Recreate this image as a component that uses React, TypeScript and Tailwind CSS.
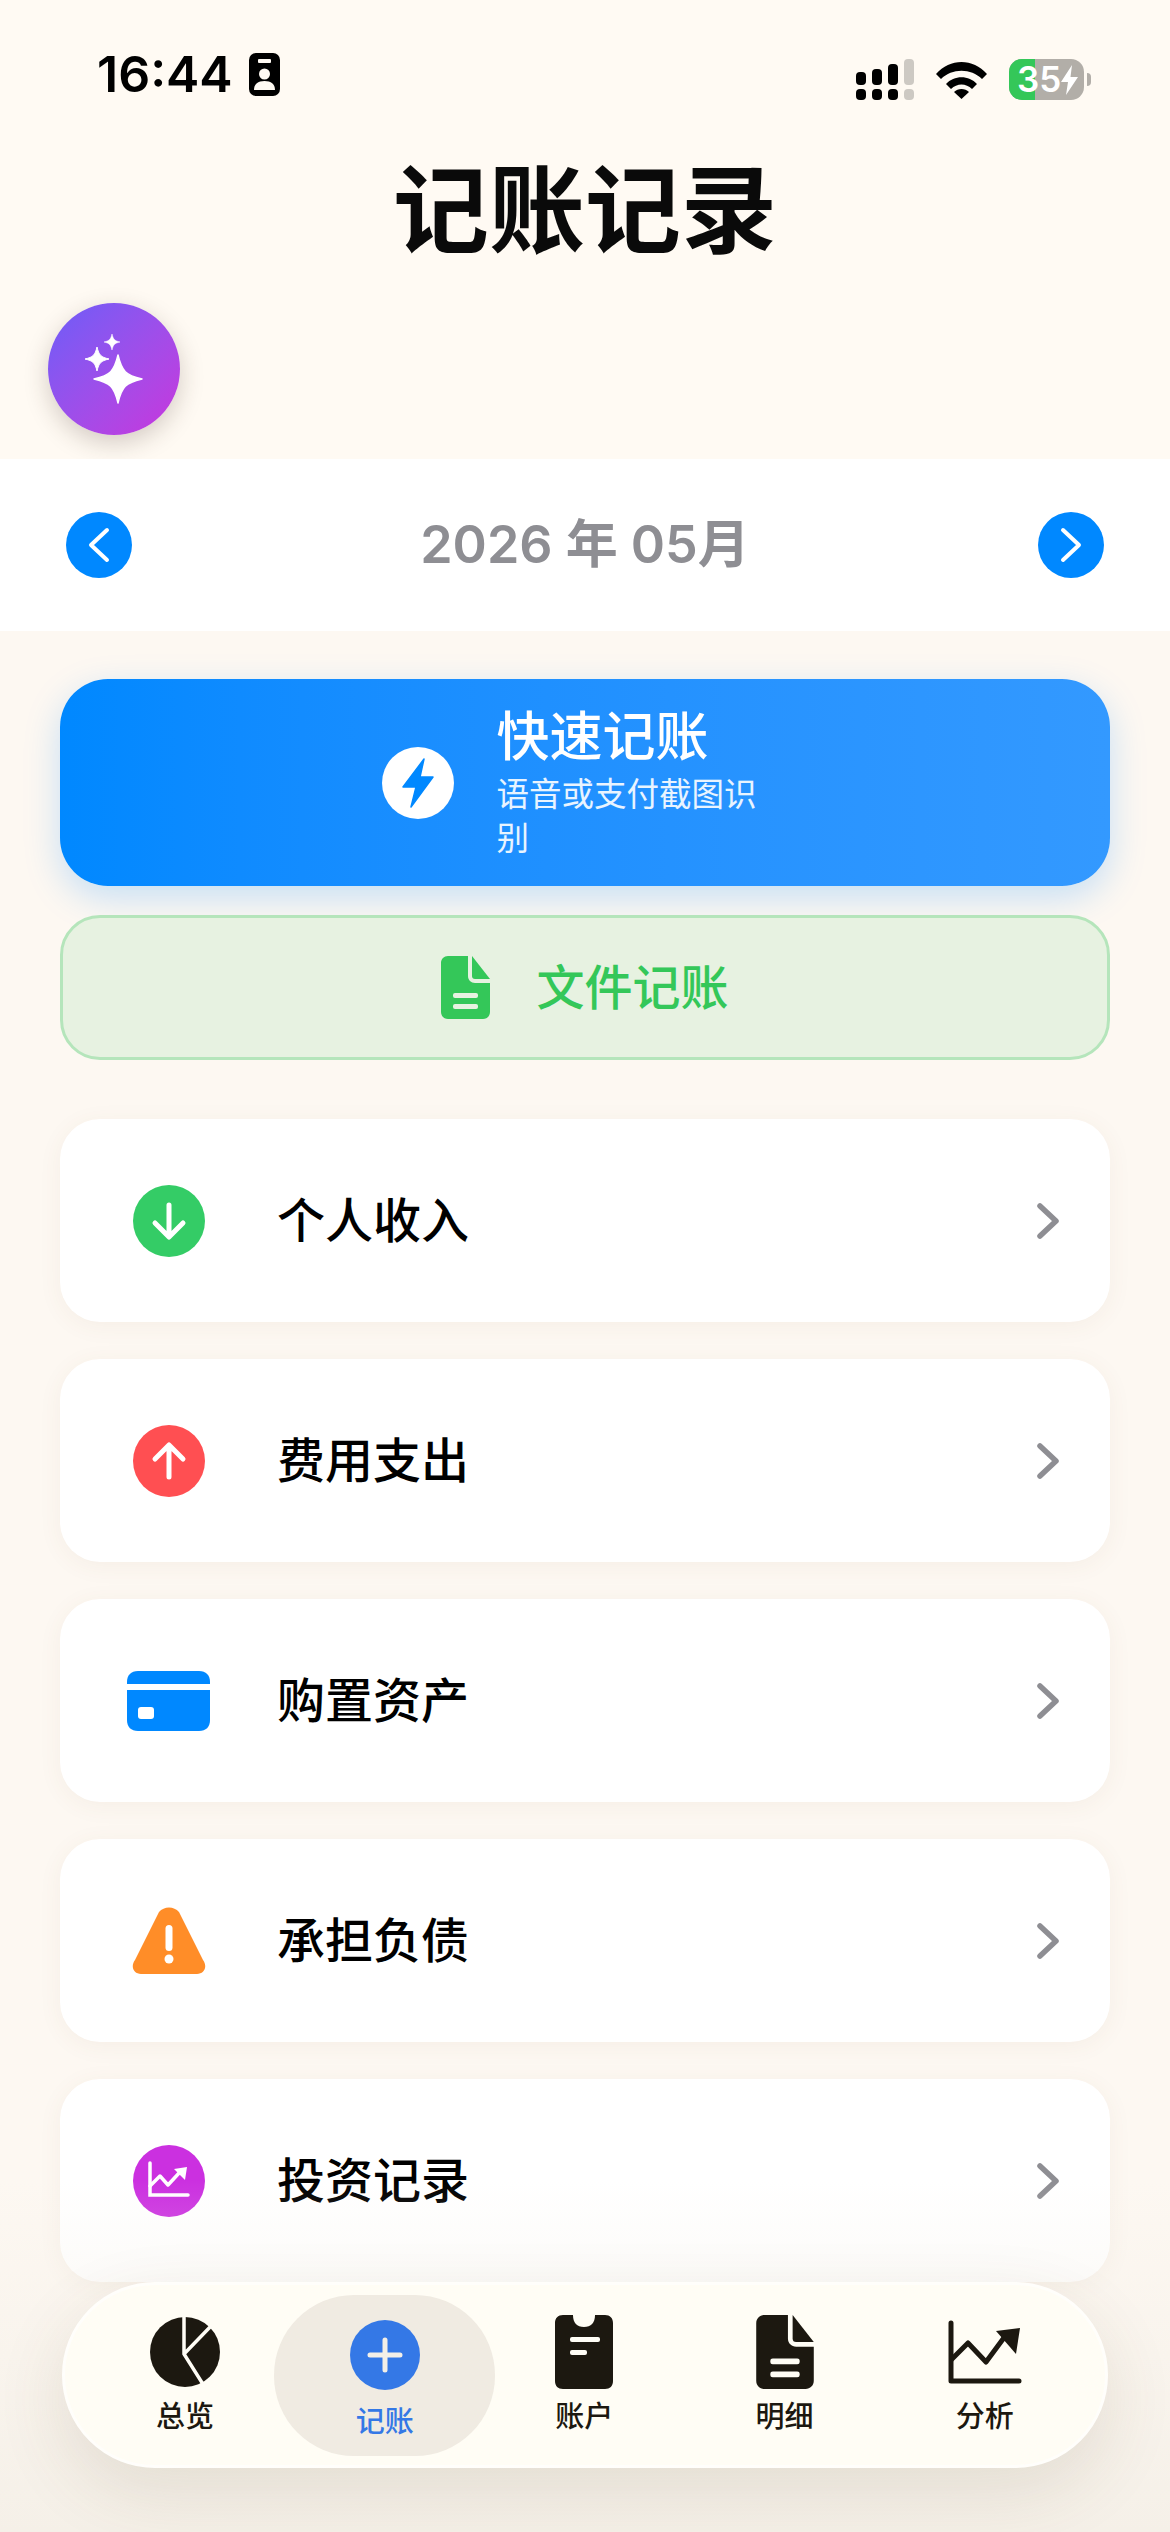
import type { ReactNode } from 'react';

const star = (x: number, y: number, r: number) => {
  const k = r * 0.16;
  return `M${x} ${y - r}C${x + k} ${y - k * 2} ${x + k * 2} ${y - k} ${x + r} ${y}C${x + k * 2} ${y + k} ${x + k} ${y + k * 2} ${x} ${y + r}C${x - k} ${y + k * 2} ${x - k * 2} ${y + k} ${x - r} ${y}C${x - k * 2} ${y - k} ${x - k} ${y - k * 2} ${x} ${y - r}Z`;
};

function StatusBar() {
  return (
    <div className="flex h-[100px] items-end justify-between pl-[97px] pr-[79px]">
      <div className="flex items-center gap-[16px] pb-[1px]">
        <span className="text-[50px] font-semibold leading-[50px] text-black">16:44</span>
        <svg width="31" height="43" viewBox="0 0 31 43">
          <rect width="31" height="43" rx="7" fill="#000" />
          <rect x="9" y="6" width="13" height="4" rx="1" fill="#fffaf3" />
          <circle cx="15.5" cy="21" r="5.5" fill="#fffaf3" />
          <path d="M5 37c0-6 4-9 10.500-9s10.500 3 10.500 9z" fill="#fffaf3" />
        </svg>
      </div>
      <div className="flex items-center gap-[22px]">
        <svg width="58" height="41" viewBox="0 0 58 41">
          <rect x="0" y="13" width="10" height="13" rx="4" fill="#000" />
          <rect x="16" y="10" width="10" height="16" rx="4" fill="#000" />
          <rect x="32" y="5" width="10" height="21" rx="4" fill="#000" />
          <rect x="48" y="0" width="10" height="26" rx="4" fill="#cdc9c3" />
          <rect x="0" y="30" width="10" height="11" rx="4" fill="#000" />
          <rect x="16" y="30" width="10" height="11" rx="4" fill="#000" />
          <rect x="32" y="30" width="10" height="11" rx="4" fill="#000" />
          <rect x="48" y="30" width="10" height="11" rx="4" fill="#cdc9c3" />
        </svg>
        <svg width="51" height="38" viewBox="0 0 51 38">
          <path d="M0 13C14 -3 37 -3 51 13L46 18C35 7 16 7 5 18Z" fill="#000" />
          <path d="M10 23C18 14 33 14 41 23L36 28C30 22 21 22 15 28Z" fill="#000" />
          <path d="M18 31C22 27 29 27 33 31L25.500 38Z" fill="#000" />
        </svg>
        <div className="flex items-center gap-[3px]">
          <div className="relative flex h-[41px] w-[75px] items-center overflow-hidden rounded-[13px] bg-[#b2aea8] pl-[8px]">
            <div className="absolute inset-y-0 left-0 w-[26px] bg-[#34c759]" />
            <span className="relative text-[35px] font-semibold leading-none text-white">35</span>
            <svg className="relative" width="17" height="30" viewBox="0 0 17 30">
              <path d="M11 0L0 17H7L5 30L17 12H9.500Z" fill="#fff" />
            </svg>
          </div>
          <div className="h-[13px] w-[4px] rounded-r-full bg-[#b2aea8]" />
        </div>
      </div>
    </div>
  );
}

function FileIcon({ w, h, color, bar }: { w: number; h: number; color: string; bar: string }) {
  return (
    <svg width={w} height={h} viewBox="0 0 49 63">
      <path d="M7 0H27V20C27 24 30 27 34 27H49V56C49 60 46 63 42 63H7C3 63 0 60 0 56V7C0 3 3 0 7 0Z" fill={color} />
      <path d="M31 0L49 23H34C32 23 31 22 31 20Z" fill={color} />
      <rect x="12" y="37" width="25" height="5" rx="2" fill={bar} />
      <rect x="12" y="48" width="25" height="5" rx="2" fill={bar} />
    </svg>
  );
}

function ArrowCircle({ color, up }: { color: string; up?: boolean }) {
  return (
    <svg width="72" height="72" viewBox="0 0 72 72">
      <circle cx="36" cy="36" r="36" fill={color} />
      <path
        d={up ? 'M36 52V21M22 34L36 20L50 34' : 'M36 20V51M22 38L36 52L50 38'}
        fill="none"
        stroke="#fff"
        strokeWidth="5"
        strokeLinecap="round"
        strokeLinejoin="round"
      />
    </svg>
  );
}

function CardIcon() {
  return (
    <svg width="83" height="60" viewBox="0 0 83 60">
      <path d="M0 11C0 4 4 0 11 0H72C79 0 83 4 83 11V13H0Z" fill="#0088ff" />
      <path d="M0 19H83V49C83 56 79 60 72 60H11C4 60 0 56 0 49Z" fill="#0088ff" />
      <rect x="11" y="36" width="16" height="12" rx="3" fill="#fff" />
    </svg>
  );
}

function WarnIcon() {
  return (
    <svg width="74" height="67" viewBox="0 0 74 67">
      <path d="M27 5C32 -1 42 -1 47 5L71 53C76 60 72 67 65 67H9C2 67 -2 60 3 53Z" fill="#ff8d28" />
      <rect x="33.500" y="18" width="7" height="26" rx="3.500" fill="#fff" />
      <circle cx="37" cy="52" r="4.500" fill="#fff" />
    </svg>
  );
}

function InvestIcon() {
  return (
    <svg width="72" height="72" viewBox="0 0 72 72">
      <circle cx="36" cy="36" r="36" fill="#cb30e0" />
      <path d="M17 18V50H55" fill="none" stroke="#fff" strokeWidth="3.500" strokeLinecap="round" />
      <path d="M17 41L27 31L35 40L47 27" fill="none" stroke="#fff" strokeWidth="3.500" strokeLinecap="round" strokeLinejoin="round" />
      <path d="M41 24L54 22L52 35Z" fill="#fff" />
    </svg>
  );
}

const rows: { label: string; icon: ReactNode }[] = [
  { label: '个人收入', icon: <ArrowCircle color="#34cc66" /> },
  { label: '费用支出', icon: <ArrowCircle color="#ff4f52" up /> },
  { label: '购置资产', icon: <CardIcon /> },
  { label: '承担负债', icon: <WarnIcon /> },
  { label: '投资记录', icon: <InvestIcon /> },
];

function RecordRow({ label, icon }: { label: string; icon: ReactNode }) {
  return (
    <div className="flex h-[203px] items-center rounded-[40px] bg-white pr-[50px] shadow-[0_4px_24px_rgba(120,90,50,0.06)]">
      <div className="flex w-[217px] justify-center pr-[0px]">
        <div className="flex w-[144px] justify-center">{icon}</div>
      </div>
      <span className="flex-1 text-[48px] font-medium leading-none text-black">{label}</span>
      <svg width="24" height="38" viewBox="0 0 24 38">
        <path d="M4 4L20 19L4 34" fill="none" stroke="#8e8e93" strokeWidth="5.500" strokeLinecap="round" strokeLinejoin="round" />
      </svg>
    </div>
  );
}

function PieIcon() {
  return (
    <svg width="70" height="70" viewBox="0 0 70 70">
      <circle cx="35" cy="35" r="35" fill="#1c1810" />
      <path d="M34 0V37L56 72M34 37L62 8" fill="none" stroke="#fffdf6" strokeWidth="3.500" />
    </svg>
  );
}

function AccountIcon() {
  return (
    <svg width="58" height="74" viewBox="0 0 58 74">
      <path d="M8 0H18C18 8 22 12 29 12C36 12 40 8 40 0H50C55 0 58 3 58 8V66C58 71 55 74 50 74H8C3 74 0 71 0 66V8C0 3 3 0 8 0Z" fill="#1c1810" />
      <rect x="15" y="22" width="30" height="5" rx="2" fill="#fffdf6" />
      <rect x="15" y="35" width="17" height="5" rx="2" fill="#fffdf6" />
    </svg>
  );
}

function ChartIcon() {
  return (
    <svg width="74" height="64" viewBox="0 0 74 64">
      <path d="M3 3V61H71" fill="none" stroke="#1c1810" strokeWidth="5" strokeLinecap="round" strokeLinejoin="round" />
      <path d="M3 40L20 23L38 42L58 15" fill="none" stroke="#1c1810" strokeWidth="5" strokeLinejoin="round" />
      <path d="M48 11L72 8L68 34Z" fill="#1c1810" />
    </svg>
  );
}

function TabBar() {
  return (
    <div className="absolute left-[62px] top-[2282px] flex h-[186px] w-[1046px] items-center rounded-[93px] border-[3px] border-[#fffefb] bg-[#fffdf5] px-[20px] shadow-[0_24px_70px_rgba(90,70,40,0.12)]">
      <Tab label="总览" icon={<PieIcon />} />
      <div className="-mx-[11px] flex h-[161px] w-[221px] shrink-0 flex-col items-center justify-start rounded-[80px] bg-[#f0ebe2] pt-[25px]">
        <svg width="70" height="70" viewBox="0 0 70 70">
          <circle cx="35" cy="35" r="35" fill="#3478e6" />
          <path d="M35 20V50M20 35H50" stroke="#f3efe7" strokeWidth="5" strokeLinecap="round" />
        </svg>
        <span className="mt-[14px] text-[29px] font-medium leading-[36px] text-[#3478e6]">记账</span>
      </div>
      <Tab label="账户" icon={<AccountIcon />} />
      <Tab label="明细" icon={<FileIconTab />} />
      <Tab label="分析" icon={<ChartIcon />} />
    </div>
  );
}

function FileIconTab() {
  return <FileIcon w={58} h={74} color="#1c1810" bar="#fffdf5" />;
}

function Tab({ label, icon }: { label: string; icon: ReactNode }) {
  return (
    <div className="flex flex-1 flex-col items-center">
      <div className="flex h-[74px] items-center">{icon}</div>
      <span className="mt-[10px] text-[29px] font-medium leading-[36px] text-[#1c1810]">{label}</span>
    </div>
  );
}

export default function App() {
  return (
    <div className="relative h-[2532px] w-[1170px] overflow-hidden bg-[#fdf8f2] font-[Inter,'Noto_Sans_CJK_SC',sans-serif]">
      <div className="h-[459px] bg-[#fffaf3]">
        <StatusBar />
        <h1 className="mt-[54px] text-center text-[96px] font-bold leading-[112px] text-[#0a0a0a]">记账记录</h1>
        <div className="ml-[48px] mt-[37px] flex h-[132px] w-[132px] items-center justify-center rounded-full bg-gradient-to-br from-[#6a5cf8] to-[#c832dc] shadow-[0_8px_24px_rgba(60,40,30,0.22)]">
          <svg width="132" height="132" viewBox="0 0 132 132">
            <path d={star(70, 76, 24)} fill="#fff" stroke="#fff" strokeWidth="1.500" strokeLinejoin="round" />
            <path d={star(49, 56, 12)} fill="#fff" stroke="#fff" strokeWidth="1" strokeLinejoin="round" />
            <path d={star(64, 39, 8)} fill="#fff" stroke="#fff" strokeWidth="0.500" strokeLinejoin="round" />
          </svg>
        </div>
      </div>

      <div className="flex h-[172px] items-center justify-between bg-white px-[66px]">
        <div className="flex h-[66px] w-[66px] items-center justify-center rounded-full bg-[#0088ff]">
          <svg width="22" height="36" viewBox="0 0 22 36">
            <path d="M19 3L3 18L19 33" fill="none" stroke="#fff" strokeWidth="4" strokeLinecap="round" strokeLinejoin="round" />
          </svg>
        </div>
        <span className="text-[52px] font-semibold leading-none text-[#8e8e93]">2026 年 05月</span>
        <div className="flex h-[66px] w-[66px] items-center justify-center rounded-full bg-[#0088ff]">
          <svg width="22" height="36" viewBox="0 0 22 36">
            <path d="M3 3L19 18L3 33" fill="none" stroke="#fff" strokeWidth="4" strokeLinecap="round" strokeLinejoin="round" />
          </svg>
        </div>
      </div>

      <div className="flex flex-col px-[60px] pt-[48px]">
        <div className="flex h-[207px] items-center justify-center gap-[43px] rounded-[48px] bg-gradient-to-r from-[#0088ff] to-[#3399ff] shadow-[0_12px_36px_rgba(0,136,255,0.22)]">
          <div className="flex h-[72px] w-[72px] items-center justify-center rounded-full bg-white">
            <svg width="32" height="50" viewBox="0 0 32 50">
              <path d="M22 1L1 29H14L9 49L31 19H18Z" fill="#0088ff" stroke="#0088ff" strokeWidth="1.500" strokeLinejoin="round" />
            </svg>
          </div>
          <div className="flex w-[292px] flex-col">
            <span className="text-[53px] font-medium leading-[64px] text-white">快速记账</span>
            <span className="mt-[4px] text-[32.500px] leading-[44px] text-white/90">语音或支付截图识别</span>
          </div>
        </div>

        <div className="mt-[29px] flex h-[145px] items-center justify-center gap-[46px] rounded-[40px] border-[3px] border-[#b5e5bb] bg-[#e7f2e1]">
          <FileIcon w={49} h={63} color="#34c759" bar="#e7f2e1" />
          <span className="text-[48px] font-medium leading-none text-[#34c759]">文件记账</span>
        </div>

        <div className="mt-[59px] flex flex-col gap-[37px]">
          {rows.map((r) => (
            <RecordRow key={r.label} label={r.label} icon={r.icon} />
          ))}
        </div>
      </div>

      <div className="pointer-events-none absolute inset-x-0 bottom-0 h-[352px] bg-gradient-to-b from-[#f5f0e800] to-[#f5f0e8]" />
      <TabBar />
    </div>
  );
}
